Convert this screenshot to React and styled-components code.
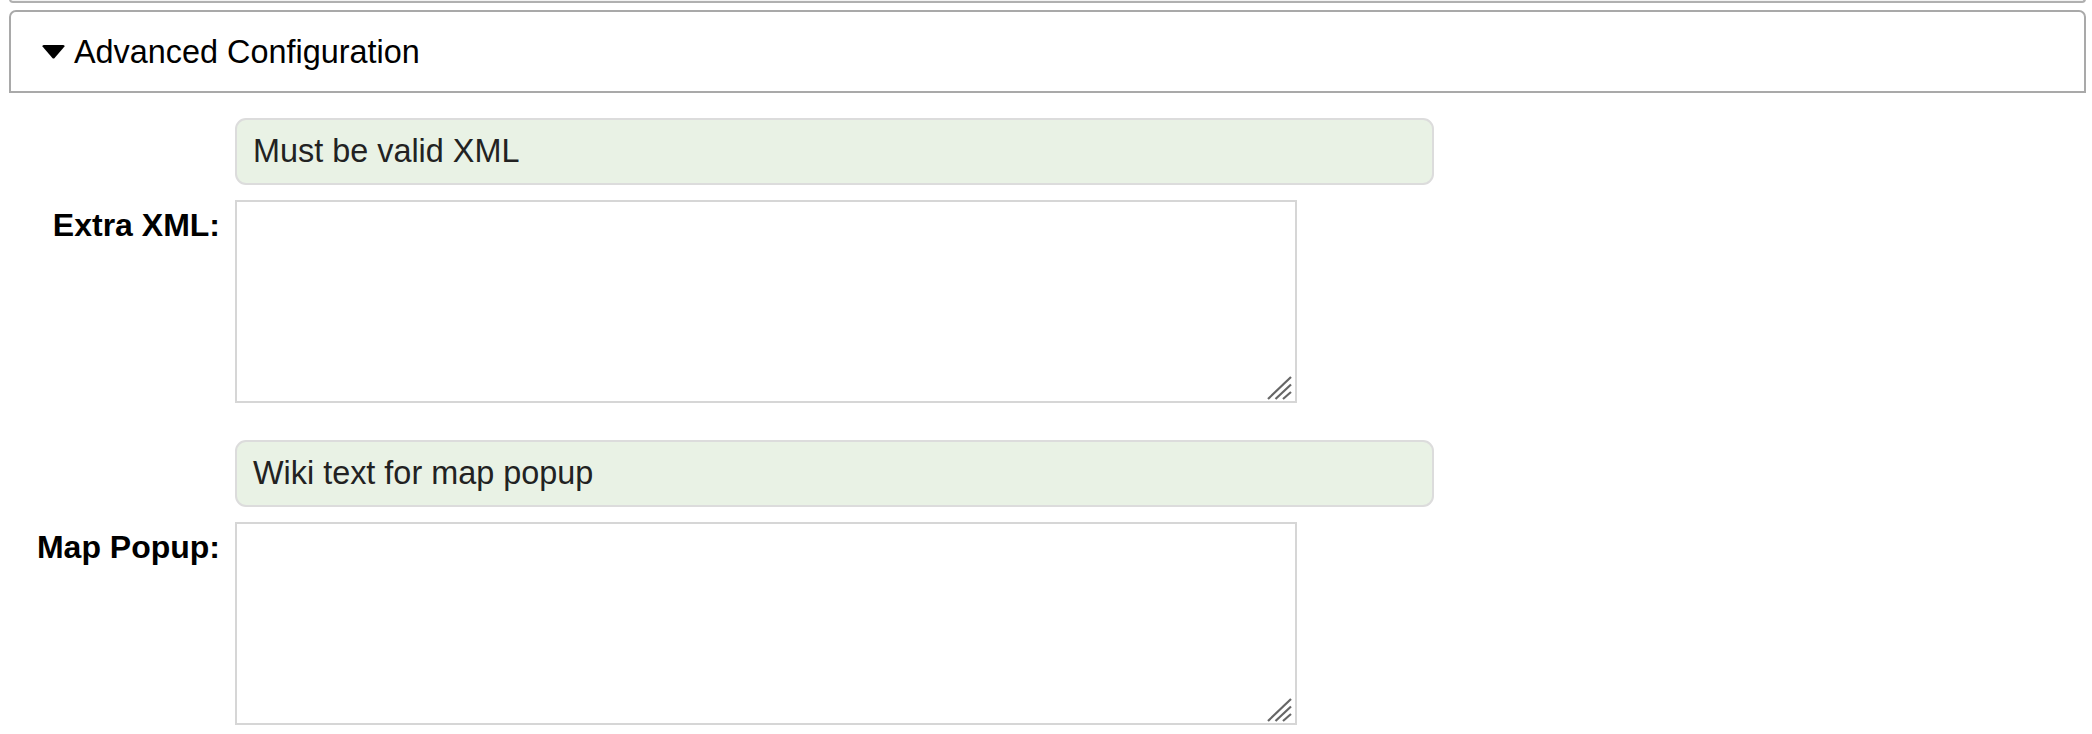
import styled, { createGlobalStyle } from "styled-components";

const GlobalStyle = createGlobalStyle`
  body {
    margin: 0;
    background: #fff;
    font-family: "Liberation Sans", Arial, Helvetica, sans-serif;
    color: #000;
  }
`;

const fields = [
  { label: "Extra XML:", help: "Must be valid XML" },
  { label: "Map Popup:", help: "Wiki text for map popup" },
];

const CaretDown = () => (
  <svg width="23" height="14" viewBox="0 0 23 14" aria-hidden="true">
    <path d="M0.5 1.5 Q0 0 1.8 0 L21.2 0 Q23 0 22.5 1.5 L12.6 13 Q11.5 14 10.4 13 Z" fill="#000" />
  </svg>
);

const ResizeGrip = () => (
  <svg width="28" height="24" viewBox="0 0 28 24" aria-hidden="true">
    <g stroke="#666" strokeWidth="2.2">
      <line x1="3" y1="23" x2="26" y2="1" />
      <line x1="10.5" y1="23" x2="26" y2="8.5" />
      <line x1="18" y1="23" x2="26" y2="16" />
    </g>
  </svg>
);

export default function App() {
  return (
    <>
      <GlobalStyle />
      <Page>
        <CollapsedSection />
        <SectionHeader>
          <CaretDown />
          <span>Advanced Configuration</span>
        </SectionHeader>

        <Form>
          {fields.map(({ label, help }) => (
            <Row key={label}>
              <HelpText>{help}</HelpText>
              <Label>{label}</Label>
              <AreaWrap>
                <TextArea />
                <Grip>
                  <ResizeGrip />
                </Grip>
              </AreaWrap>
            </Row>
          ))}
        </Form>
      </Page>
    </>
  );
}

const Page = styled.div`
  display: flex;
  flex-direction: column;
  padding: 0 6px 0 9px;
`;

const CollapsedSection = styled.div`
  height: 2px;
  margin-top: -1px;
  border: 2px solid #b0b0b0;
  border-top: none;
  border-radius: 0 0 7px 7px;
  background: #f3f3f3;
`;

const SectionHeader = styled.div`
  display: flex;
  align-items: center;
  gap: 9px;
  height: 79px;
  margin-top: 7px;
  padding-left: 31px;
  border: 2px solid #a9a9a9;
  border-radius: 7px 7px 0 0;
  font-size: 32.4px;

  span {
    padding-top: 1px;
  }
`;

const Form = styled.div`
  display: flex;
  flex-direction: column;
  gap: 37px;
  padding-top: 25px;
`;

const Row = styled.div`
  display: grid;
  grid-template-columns: 211px 1062px;
  column-gap: 15px;
  row-gap: 15px;
`;

const HelpText = styled.div`
  grid-column: 2;
  width: 1199px;
  box-sizing: border-box;
  padding: 13px 16px;
  line-height: 37px;
  font-size: 32.4px;
  color: #222;
  background: #e9f2e5;
  border: 2px solid #dcdcdc;
  border-radius: 11px;
`;

const Label = styled.label`
  grid-column: 1;
  text-align: right;
  font-weight: bold;
  font-size: 32px;
  line-height: 37px;
  padding-top: 7px;
`;

const AreaWrap = styled.div`
  position: relative;
  width: 1062px;
  height: 203px;
`;

const TextArea = styled.textarea`
  display: block;
  box-sizing: border-box;
  width: 100%;
  height: 100%;
  margin: 0;
  border: 2px solid #d6d6d6;
  background: #fff;
  resize: none;
  outline: none;
`;

const Grip = styled.span`
  position: absolute;
  right: 4px;
  bottom: 3px;
  display: flex;
  pointer-events: none;
`;
